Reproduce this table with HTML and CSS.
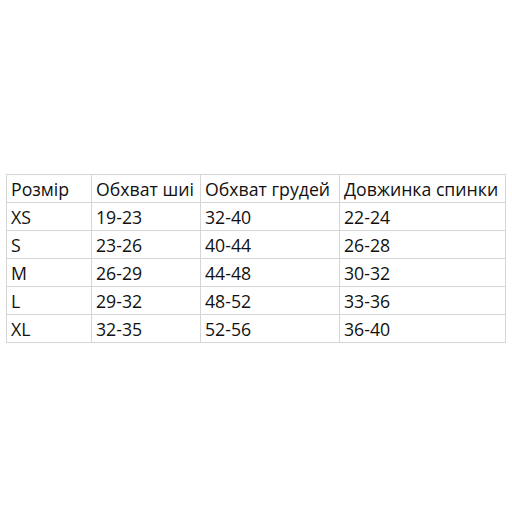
FILE: index.html
```html
<!DOCTYPE html>
<html>
<head>
<meta charset="utf-8">
<link rel="stylesheet" href="styles.css">
</head>
<body>
<table class="sizes">
  <colgroup>
    <col class="c1"><col class="c2"><col class="c3"><col class="c4">
  </colgroup>
  <tr><td>Розмір</td><td>Обхват шиі</td><td>Обхват грудей</td><td>Довжинка спинки</td></tr>
  <tr><td>XS</td><td>19-23</td><td>32-40</td><td>22-24</td></tr>
  <tr><td>S</td><td>23-26</td><td>40-44</td><td>26-28</td></tr>
  <tr><td>M</td><td>26-29</td><td>44-48</td><td>30-32</td></tr>
  <tr><td>L</td><td>29-32</td><td>48-52</td><td>33-36</td></tr>
  <tr><td>XL</td><td>32-35</td><td>52-56</td><td>36-40</td></tr>
</table>
</body>
</html>
```
FILE: styles.css
```css
html, body {
  margin: 0;
  padding: 0;
  background: #ffffff;
}
body {
  width: 512px;
  height: 512px;
  overflow: hidden;
  font-family: "Open Sans", "Liberation Sans", sans-serif;
}
.sizes {
  border-collapse: collapse;
  table-layout: fixed;
  margin: 174px 0 0 6px;
  width: 499px;
  color: #111111;
  font-size: 17.7px;
}
.c1 { width: 85px; }
.c2 { width: 109px; }
.c3 { width: 139px; }
.c4 { width: 166px; }
.sizes td {
  border: 1px solid #d6d6d6;
  height: 28px;
  padding: 0 0 1px 4px;
  vertical-align: bottom;
  line-height: 24px;
  white-space: nowrap;
  overflow: hidden;
  box-sizing: border-box;
}
```
